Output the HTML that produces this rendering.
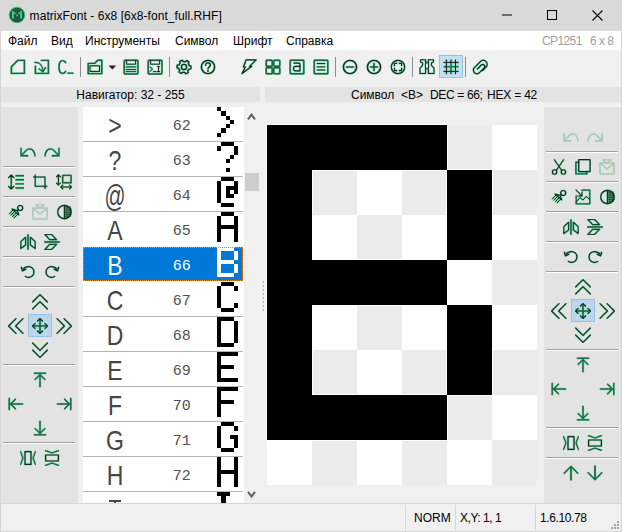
<!DOCTYPE html>
<html><head><meta charset="utf-8">
<style>
*{margin:0;padding:0;box-sizing:border-box}
html,body{width:622px;height:532px;overflow:hidden;background:#f0f0f0;font-family:"Liberation Sans",sans-serif;font-size:12px;color:#000}
.a{position:absolute}
#title{left:0;top:0;width:622px;height:31px;background:#d9d9d9}
#menu{left:0;top:31px;width:622px;height:19px;background:#fff}
.mi{position:absolute;top:34px;font-size:12px;white-space:nowrap}
#tb{left:0;top:50px;width:622px;height:37px;background:#f0f0f0}
.hdr{position:absolute;top:87px;height:15px;background:#e3e3e3;font-size:12px;line-height:17px;text-align:center;white-space:nowrap;overflow:hidden}
.panel{position:absolute;top:107px;height:396px;width:77px;background:#e3e3e3}
#list{left:83px;top:107px;width:161px;height:396px;background:#fff;overflow:hidden}
.row{position:absolute;left:0;width:161px;height:34px}
.row.sel{background:#0078d7;height:34px;width:160px;}
.row.sel::after{content:"";position:absolute;left:0;top:0;right:0;bottom:0;border:1px dotted #f28a1e}
.sep{position:absolute;left:0;width:160px;height:1px;background:#b4b4b4}
.ch{position:absolute;left:11.5px;top:3px;width:40px;text-align:center;font-size:28px;line-height:32px;color:#454545;transform:scaleX(0.82)}
.num{position:absolute;left:89.7px;top:12px;font-family:"Liberation Mono",monospace;font-size:15px;line-height:16px;color:#505050}
.row.sel .ch,.row.sel .num{color:#fff}
.gl{position:absolute;left:134px;top:0;width:25.5px;height:34px;shape-rendering:crispEdges}
.row.sel .gl{top:0}
#status{left:0;top:503px;width:622px;height:29px;background:#f0f0f0;border-top:1px solid #d7d7d7}
.ht{position:absolute;top:88px;line-height:15px;white-space:nowrap}
.psep{position:absolute;height:1px;background:#a0a0a0;border-bottom:1px solid #fff;box-sizing:content-box}
</style></head><body>
<div class="a" id="title"></div>
<svg class="a" style="left:8px;top:6px" width="18" height="18" viewBox="0 0 18 18">
<circle cx="9" cy="9" r="7.8" fill="#1b5e3d" stroke="#3dbb7b" stroke-width="0.9"/>
<g fill="#55c58f"><rect x="4" y="5" width="1.8" height="7.6"/><rect x="12.2" y="5" width="1.8" height="7.6"/><rect x="6" y="6.5" width="1.6" height="1.6"/><rect x="10.4" y="6.5" width="1.6" height="1.6"/><rect x="8.2" y="8.6" width="1.6" height="1.6"/></g>
</svg>
<div class="a" style="left:29.6px;top:9px;font-size:12px;line-height:14px;white-space:nowrap;letter-spacing:0.06px">matrixFont - 6x8 [6x8-font_full.RHF]</div>
<svg class="a" style="left:502px;top:14px" width="11" height="2"><rect x="0" y="0.5" width="10" height="1" fill="#000"/></svg>
<svg class="a" style="left:547px;top:10px" width="11" height="11"><rect x="0.5" y="0.5" width="9" height="9" fill="none" stroke="#000" stroke-width="1"/></svg>
<svg class="a" style="left:592px;top:10px" width="12" height="12"><path d="M0.5 0.5L10.5 10.5M10.5 0.5L0.5 10.5" stroke="#000" stroke-width="1.1"/></svg>

<div class="a" id="menu"></div>
<div class="mi" style="left:8px">Файл</div>
<div class="mi" style="left:51px">Вид</div>
<div class="mi" style="left:85px">Инструменты</div>
<div class="mi" style="left:175px">Символ</div>
<div class="mi" style="left:233px">Шрифт</div>
<div class="mi" style="left:286px">Справка</div>
<div class="mi" style="left:542px;color:#a0a0a0;letter-spacing:-0.6px">CP1251</div>
<div class="mi" style="left:590px;color:#a0a0a0;letter-spacing:-0.5px">6 x 8</div>

<div class="a" id="tb"></div>
<svg class="a" style="left:10px;top:59px" width="16" height="16" viewBox="0 0 16 16" fill="none" stroke="#1b6040" stroke-width="1.8" stroke-linejoin="round" stroke-linecap="round"><g stroke="#6ad6a2" stroke-width="2.44" opacity="0.8"><path d="M1.4 14.4V7.8L7.6 1.4H14.4V14.4Z"/></g><g stroke-width="1.44"><path d="M1.4 14.4V7.8L7.6 1.4H14.4V14.4Z"/></g></svg>
<svg class="a" style="left:34px;top:59px" width="16" height="16" viewBox="0 0 16 16" fill="none" stroke="#1b6040" stroke-width="1.8" stroke-linejoin="round" stroke-linecap="round"><g stroke="#6ad6a2" stroke-width="2.44" opacity="0.8"><path d="M1.4 7.2V14.4H14.4V1.4H7.4"/><path d="M1 3.4C5 3.2 8.6 6 9 12" stroke-width="2.28"/><path d="M5.2 10L9 12.6L11.6 8.6" stroke-width="2.28"/></g><g stroke-width="1.44"><path d="M1.4 7.2V14.4H14.4V1.4H7.4"/><path d="M1 3.4C5 3.2 8.6 6 9 12" stroke-width="1.28"/><path d="M5.2 10L9 12.6L11.6 8.6" stroke-width="1.28"/></g></svg>
<svg class="a" style="left:57px;top:59px" width="17" height="16" viewBox="0 0 17 16" fill="none" stroke="#1b6040" stroke-width="1.8" stroke-linejoin="round" stroke-linecap="round"><g stroke="#6ad6a2" stroke-width="2.44" opacity="0.8"><path d="M8.6 3.6C8 2.2 7 1.6 5.6 1.6C3.2 1.6 2 3.8 2 8C2 12.2 3.2 14.4 5.6 14.4C7 14.4 8 13.8 8.6 12.4"/><path d="M10.8 14.2H16" stroke-width="2.20"/></g><g stroke-width="1.44"><path d="M8.6 3.6C8 2.2 7 1.6 5.6 1.6C3.2 1.6 2 3.8 2 8C2 12.2 3.2 14.4 5.6 14.4C7 14.4 8 13.8 8.6 12.4"/><path d="M10.8 14.2H16" stroke-width="1.20"/></g></svg>
<div class="a" style="left:80px;top:57px;width:1px;height:20px;background:#8c8c8c"></div>
<svg class="a" style="left:87px;top:59px" width="16" height="16" viewBox="0 0 16 16" fill="none" stroke="#1b6040" stroke-width="1.8" stroke-linejoin="round" stroke-linecap="round"><g stroke="#6ad6a2" stroke-width="2.44" opacity="0.8"><path d="M1.2 14.6V4.4H7.6L10.8 1.2H14.8V14.6Z"/><rect x="3.4" y="6.8" width="9.2" height="5.6" stroke="#6ad6a2" stroke-width="1.96"/></g><g stroke-width="1.44"><path d="M1.2 14.6V4.4H7.6L10.8 1.2H14.8V14.6Z"/><rect x="3.4" y="6.8" width="9.2" height="5.6" stroke="#111" stroke-width="0.96"/></g></svg>
<svg class="a" style="left:108px;top:65px" width="9" height="5"><path d="M0.5 0.5H8.2L4.35 4.4Z" fill="#222"/></svg>
<svg class="a" style="left:123px;top:59px" width="16" height="16" viewBox="0 0 16 16" fill="none" stroke="#1b6040" stroke-width="1.8" stroke-linejoin="round" stroke-linecap="round"><g stroke="#6ad6a2" stroke-width="2.44" opacity="0.8"><rect x="1.2" y="1.2" width="13.8" height="13.8" rx="1.2"/><path d="M3.6 1.4V5.2H12.6V1.4" stroke="#6ad6a2" stroke-width="1.88"/><path d="M3.2 7.8H12.8" stroke-width="2.28"/><path d="M3.2 10.5H12.8M3.2 12.6H12.8" stroke="#6ad6a2" stroke-width="1.80"/></g><g stroke-width="1.44"><rect x="1.2" y="1.2" width="13.8" height="13.8" rx="1.2"/><path d="M3.6 1.4V5.2H12.6V1.4" stroke="#111" stroke-width="0.88"/><path d="M3.2 7.8H12.8" stroke-width="1.28"/><path d="M3.2 10.5H12.8M3.2 12.6H12.8" stroke="#111" stroke-width="0.80"/></g></svg>
<svg class="a" style="left:147px;top:59px" width="16" height="16" viewBox="0 0 16 16" fill="none" stroke="#1b6040" stroke-width="1.8" stroke-linejoin="round" stroke-linecap="round"><g stroke="#6ad6a2" stroke-width="2.44" opacity="0.8"><rect x="1.2" y="1.2" width="13.8" height="13.8" rx="1.2"/><path d="M3.6 1.4V5.2H12.6V1.4" stroke="#6ad6a2" stroke-width="1.88"/><path d="M3 8L5.6 10.2L3 12.4" stroke="#6ad6a2" stroke-width="1.88"/><path d="M6.4 12.6H9M10.6 7.6H12.4M11.5 7.6V12.6M10.4 12.6H12.6" stroke="#6ad6a2" stroke-width="1.88"/></g><g stroke-width="1.44"><rect x="1.2" y="1.2" width="13.8" height="13.8" rx="1.2"/><path d="M3.6 1.4V5.2H12.6V1.4" stroke="#111" stroke-width="0.88"/><path d="M3 8L5.6 10.2L3 12.4" stroke="#111" stroke-width="0.88"/><path d="M6.4 12.6H9M10.6 7.6H12.4M11.5 7.6V12.6M10.4 12.6H12.6" stroke="#111" stroke-width="0.88"/></g></svg>
<div class="a" style="left:169px;top:57px;width:1px;height:20px;background:#8c8c8c"></div>
<svg class="a" style="left:176px;top:59px" width="16" height="16" viewBox="0 0 16 16" fill="none" stroke="#1b6040" stroke-width="1.8" stroke-linejoin="round" stroke-linecap="round"><g stroke="#6ad6a2" stroke-width="2.44" opacity="0.8"><path d="M15.00 8.00L14.94 8.91L14.76 9.81L12.99 10.07L12.68 10.70L12.28 11.29L11.82 11.82L12.26 13.55L11.50 14.06L10.68 14.47L9.81 14.76L8.70 13.35L8.00 13.40L7.30 13.35L6.60 13.22L5.32 14.47L4.50 14.06L3.74 13.55L3.05 12.95L3.72 11.29L3.32 10.70L3.01 10.07L2.78 9.40L1.06 8.91L1.00 8.00L1.06 7.09L1.24 6.19L3.01 5.93L3.32 5.30L3.72 4.71L4.18 4.18L3.74 2.45L4.50 1.94L5.32 1.53L6.19 1.24L7.30 2.65L8.00 2.60L8.70 2.65L9.40 2.78L10.68 1.53L11.50 1.94L12.26 2.45L12.95 3.05L12.28 4.71L12.68 5.30L12.99 5.93L13.22 6.60L14.94 7.09Z" stroke="#6ad6a2" stroke-width="2.28"/><circle cx="8" cy="8" r="2.6" stroke="#6ad6a2" stroke-width="2.28"/></g><g stroke-width="1.44"><path d="M15.00 8.00L14.94 8.91L14.76 9.81L12.99 10.07L12.68 10.70L12.28 11.29L11.82 11.82L12.26 13.55L11.50 14.06L10.68 14.47L9.81 14.76L8.70 13.35L8.00 13.40L7.30 13.35L6.60 13.22L5.32 14.47L4.50 14.06L3.74 13.55L3.05 12.95L3.72 11.29L3.32 10.70L3.01 10.07L2.78 9.40L1.06 8.91L1.00 8.00L1.06 7.09L1.24 6.19L3.01 5.93L3.32 5.30L3.72 4.71L4.18 4.18L3.74 2.45L4.50 1.94L5.32 1.53L6.19 1.24L7.30 2.65L8.00 2.60L8.70 2.65L9.40 2.78L10.68 1.53L11.50 1.94L12.26 2.45L12.95 3.05L12.28 4.71L12.68 5.30L12.99 5.93L13.22 6.60L14.94 7.09Z" stroke="#0f2e1e" stroke-width="1.28"/><circle cx="8" cy="8" r="2.6" stroke="#0f2e1e" stroke-width="1.28"/></g></svg>
<svg class="a" style="left:200px;top:59px" width="16" height="16" viewBox="0 0 16 16" fill="none" stroke="#1b6040" stroke-width="1.8" stroke-linejoin="round" stroke-linecap="round"><g stroke="#6ad6a2" stroke-width="2.44" opacity="0.8"><circle cx="8" cy="8" r="6.6" stroke="#6ad6a2" stroke-width="2.36"/><path d="M5.6 6.2C5.6 4.6 6.6 3.8 8 3.8C9.4 3.8 10.4 4.6 10.4 6C10.4 7.6 8.2 7.8 8 9.8" stroke="#6ad6a2" stroke-width="2.28"/><circle cx="8" cy="12" r="0.9" fill="#6ad6a2" stroke="none"/></g><g stroke-width="1.44"><circle cx="8" cy="8" r="6.6" stroke="#0f2e1e" stroke-width="1.36"/><path d="M5.6 6.2C5.6 4.6 6.6 3.8 8 3.8C9.4 3.8 10.4 4.6 10.4 6C10.4 7.6 8.2 7.8 8 9.8" stroke="#0f2e1e" stroke-width="1.28"/><circle cx="8" cy="12" r="0.9" fill="#0f2e1e" stroke="none"/></g></svg>
<svg class="a" style="left:241px;top:59px" width="16" height="16" viewBox="0 0 16 16" fill="none" stroke="#1b6040" stroke-width="1.8" stroke-linejoin="round" stroke-linecap="round"><g stroke="#6ad6a2" stroke-width="2.44" opacity="0.8"><path d="M5.2 0.8H15.2L8.6 7.4H10.6L1 14.6L4.4 8H2.4Z" stroke="#6ad6a2" stroke-width="2.20"/></g><g stroke-width="1.44"><path d="M5.2 0.8H15.2L8.6 7.4H10.6L1 14.6L4.4 8H2.4Z" stroke="#0f2e1e" stroke-width="1.20"/></g></svg>
<svg class="a" style="left:265px;top:59px" width="16" height="16" viewBox="0 0 16 16" fill="none" stroke="#1b6040" stroke-width="1.8" stroke-linejoin="round" stroke-linecap="round"><g stroke="#6ad6a2" stroke-width="2.44" opacity="0.8"><rect x="1.2" y="1.2" width="6" height="6" rx="0.8"/><rect x="8.8" y="1.2" width="6" height="6" rx="0.8"/><rect x="1.2" y="8.8" width="6" height="6" rx="0.8"/><rect x="8.8" y="8.8" width="6" height="6" rx="0.8"/></g><g stroke-width="1.44"><rect x="1.2" y="1.2" width="6" height="6" rx="0.8"/><rect x="8.8" y="1.2" width="6" height="6" rx="0.8"/><rect x="1.2" y="8.8" width="6" height="6" rx="0.8"/><rect x="8.8" y="8.8" width="6" height="6" rx="0.8"/></g></svg>
<svg class="a" style="left:289px;top:59px" width="16" height="16" viewBox="0 0 16 16" fill="none" stroke="#1b6040" stroke-width="1.8" stroke-linejoin="round" stroke-linecap="round"><g stroke="#6ad6a2" stroke-width="2.44" opacity="0.8"><rect x="1.2" y="1.2" width="13.6" height="13.6" rx="0.8"/><path d="M5 4.2H9.6C10.6 4.2 11 4.8 11 5.8V11.8M11 7.4H6.4C5.2 7.4 4.6 8.2 4.6 9.4V10.2C4.6 11.4 5.2 11.8 6.4 11.8H11" stroke="#6ad6a2" stroke-width="2.20"/></g><g stroke-width="1.44"><rect x="1.2" y="1.2" width="13.6" height="13.6" rx="0.8"/><path d="M5 4.2H9.6C10.6 4.2 11 4.8 11 5.8V11.8M11 7.4H6.4C5.2 7.4 4.6 8.2 4.6 9.4V10.2C4.6 11.4 5.2 11.8 6.4 11.8H11" stroke="#0f2e1e" stroke-width="1.20"/></g></svg>
<svg class="a" style="left:313px;top:59px" width="16" height="16" viewBox="0 0 16 16" fill="none" stroke="#1b6040" stroke-width="1.8" stroke-linejoin="round" stroke-linecap="round"><g stroke="#6ad6a2" stroke-width="2.44" opacity="0.8"><rect x="1.2" y="1.2" width="13.6" height="13.6" rx="0.8"/><path d="M4.2 4.6H11.8M4.2 11H11.8" stroke="#6ad6a2" stroke-width="1.96"/><path d="M4.2 7.8H11.8" stroke-width="2.28"/></g><g stroke-width="1.44"><rect x="1.2" y="1.2" width="13.6" height="13.6" rx="0.8"/><path d="M4.2 4.6H11.8M4.2 11H11.8" stroke="#111" stroke-width="0.96"/><path d="M4.2 7.8H11.8" stroke-width="1.28"/></g></svg>
<div class="a" style="left:335px;top:57px;width:1px;height:20px;background:#8c8c8c"></div>
<svg class="a" style="left:342px;top:59px" width="16" height="16" viewBox="0 0 16 16" fill="none" stroke="#1b6040" stroke-width="1.8" stroke-linejoin="round" stroke-linecap="round"><g stroke="#6ad6a2" stroke-width="2.44" opacity="0.8"><circle cx="8" cy="8" r="6.6" stroke="#6ad6a2"/><path d="M4.6 8H11.4" stroke-width="2.60"/></g><g stroke-width="1.44"><circle cx="8" cy="8" r="6.6" stroke="#0f2e1e"/><path d="M4.6 8H11.4" stroke-width="1.60"/></g></svg>
<svg class="a" style="left:366px;top:59px" width="16" height="16" viewBox="0 0 16 16" fill="none" stroke="#1b6040" stroke-width="1.8" stroke-linejoin="round" stroke-linecap="round"><g stroke="#6ad6a2" stroke-width="2.44" opacity="0.8"><circle cx="8" cy="8" r="6.6" stroke="#6ad6a2"/><path d="M4.6 8H11.4M8 4.6V11.4" stroke-width="2.60"/></g><g stroke-width="1.44"><circle cx="8" cy="8" r="6.6" stroke="#0f2e1e"/><path d="M4.6 8H11.4M8 4.6V11.4" stroke-width="1.60"/></g></svg>
<svg class="a" style="left:390px;top:59px" width="16" height="16" viewBox="0 0 16 16" fill="none" stroke="#1b6040" stroke-width="1.8" stroke-linejoin="round" stroke-linecap="round"><g stroke="#6ad6a2" stroke-width="2.44" opacity="0.8"><circle cx="8" cy="8" r="6.7" stroke="#6ad6a2" stroke-width="2.20"/><path d="M4.4 7.2V4.4H7.2M8.8 4.4H11.6V7.2M11.6 8.8V11.6H8.8M7.2 11.6H4.4V8.8" stroke="#6ad6a2" stroke-width="2.12" stroke-linecap="butt"/></g><g stroke-width="1.44"><circle cx="8" cy="8" r="6.7" stroke="#0f2e1e" stroke-width="1.20"/><path d="M4.4 7.2V4.4H7.2M8.8 4.4H11.6V7.2M11.6 8.8V11.6H8.8M7.2 11.6H4.4V8.8" stroke="#0f2e1e" stroke-width="1.12" stroke-linecap="butt"/></g></svg>
<div class="a" style="left:412px;top:57px;width:1px;height:20px;background:#8c8c8c"></div>
<svg class="a" style="left:419px;top:59px" width="16" height="16" viewBox="0 0 16 16" fill="none" stroke="#1b6040" stroke-width="1.8" stroke-linejoin="round" stroke-linecap="round"><g stroke="#6ad6a2" stroke-width="2.44" opacity="0.8"><path d="M1.6 0.8H6.6V14.6H1V9.2L3.4 6.6C3.8 5.6 3.8 4.6 3.4 3.8L1.6 3Z M14.4 0.8H9.4V14.6H15V9.2L12.6 6.6C12.2 5.6 12.2 4.6 12.6 3.8L14.4 3Z" stroke="#6ad6a2" stroke-width="2.04"/><path d="M6.6 3.2H9.4" stroke="#6ad6a2" stroke-width="1.96"/><ellipse cx="8" cy="6.8" rx="1.6" ry="3.2" stroke="#6ad6a2" stroke-width="1.96" fill="#6ad6a2"/></g><g stroke-width="1.44"><path d="M1.6 0.8H6.6V14.6H1V9.2L3.4 6.6C3.8 5.6 3.8 4.6 3.4 3.8L1.6 3Z M14.4 0.8H9.4V14.6H15V9.2L12.6 6.6C12.2 5.6 12.2 4.6 12.6 3.8L14.4 3Z" stroke="#0f2e1e" stroke-width="1.04"/><path d="M6.6 3.2H9.4" stroke="#0f2e1e" stroke-width="0.96"/><ellipse cx="8" cy="6.8" rx="1.6" ry="3.2" stroke="#0f2e1e" stroke-width="0.96" fill="#eef"/></g></svg>
<div class="a" style="left:439px;top:55px;width:24px;height:23px;background:#c7def2;border:1px solid #94c3ea"></div>
<svg class="a" style="left:443px;top:59px" width="16" height="16" viewBox="0 0 16 16" fill="none" stroke="#1b6040" stroke-width="1.8" stroke-linejoin="round" stroke-linecap="round"><g stroke="#6ad6a2" stroke-width="2.44" opacity="0.8"><path d="M8 0.6V15.2M0.4 7.7H15.6" stroke="#6ad6a2" stroke-width="2.60" stroke-linecap="butt"/><path d="M3.4 0.6V15.2M12.5 0.6V15.2M0.4 3.4H15.6M0.4 12.4H15.6" stroke="#6ad6a2" stroke-width="1.96" stroke-linecap="butt"/></g><g stroke-width="1.44"><path d="M8 0.6V15.2M0.4 7.7H15.6" stroke="#1f7a4a" stroke-width="1.60" stroke-linecap="butt"/><path d="M3.4 0.6V15.2M12.5 0.6V15.2M0.4 3.4H15.6M0.4 12.4H15.6" stroke="#111" stroke-width="0.96" stroke-linecap="butt"/></g></svg>
<div class="a" style="left:465px;top:57px;width:1px;height:20px;background:#8c8c8c"></div>
<svg class="a" style="left:472px;top:59px" width="16" height="16" viewBox="0 0 16 16" fill="none" stroke="#1b6040" stroke-width="1.8" stroke-linejoin="round" stroke-linecap="round"><g stroke="#6ad6a2" stroke-width="2.44" opacity="0.8"><path d="M10.6 11.6L14 8.2C15.6 6.6 15.6 4.2 14 2.6C12.4 1 10 1 8.4 2.6L2.4 8.6C1 10 1 12.2 2.4 13.6C3.8 15 6 15 7.4 13.6L12.2 8.8C13 8 13 6.8 12.2 6C11.4 5.2 10.2 5.2 9.4 6L5.4 10" stroke="#6ad6a2" stroke-width="2.20"/></g><g stroke-width="1.44"><path d="M10.6 11.6L14 8.2C15.6 6.6 15.6 4.2 14 2.6C12.4 1 10 1 8.4 2.6L2.4 8.6C1 10 1 12.2 2.4 13.6C3.8 15 6 15 7.4 13.6L12.2 8.8C13 8 13 6.8 12.2 6C11.4 5.2 10.2 5.2 9.4 6L5.4 10" stroke="#0f2e1e" stroke-width="1.20"/></g></svg>

<div class="hdr" style="left:1px;width:259px">Навигатор: 32 - 255</div>
<div class="hdr" style="left:265px;width:356px"></div><div class="ht" style="left:351px">Символ</div><div class="ht" style="left:401px">&lt;B&gt;</div><div class="ht" style="left:430px;letter-spacing:-0.35px">DEC = 66;</div><div class="ht" style="left:487px;letter-spacing:-0.2px">HEX = 42</div>

<div class="panel" style="left:1px"></div>
<div class="panel" style="left:544px"></div>
<div class="a" style="left:3px;top:166px;width:72px;height:1px;background:#a0a0a0"></div><div class="a" style="left:3px;top:167px;width:72px;height:1px;background:#fff"></div>
<div class="a" style="left:3px;top:196px;width:72px;height:1px;background:#a0a0a0"></div><div class="a" style="left:3px;top:197px;width:72px;height:1px;background:#fff"></div>
<div class="a" style="left:3px;top:226px;width:72px;height:1px;background:#a0a0a0"></div><div class="a" style="left:3px;top:227px;width:72px;height:1px;background:#fff"></div>
<div class="a" style="left:3px;top:256px;width:72px;height:1px;background:#a0a0a0"></div><div class="a" style="left:3px;top:257px;width:72px;height:1px;background:#fff"></div>
<div class="a" style="left:3px;top:286px;width:72px;height:1px;background:#a0a0a0"></div><div class="a" style="left:3px;top:287px;width:72px;height:1px;background:#fff"></div>
<div class="a" style="left:3px;top:364px;width:72px;height:1px;background:#a0a0a0"></div><div class="a" style="left:3px;top:365px;width:72px;height:1px;background:#fff"></div>
<div class="a" style="left:3px;top:442px;width:72px;height:1px;background:#a0a0a0"></div><div class="a" style="left:3px;top:443px;width:72px;height:1px;background:#fff"></div>
<svg class="a" style="left:20px;top:144px" width="16" height="16" viewBox="0 0 16 16" fill="none" stroke="#1b6040" stroke-width="1.6" stroke-linejoin="round" stroke-linecap="round"><g stroke="#6ad6a2" stroke-width="2.28" opacity="0.8"><path d="M1 3.8V11.8H8.2" stroke-width="2.36" stroke-linecap="butt" stroke-linejoin="miter"/><path d="M1.6 11.2L6.2 6.4C9.4 3.2 14.2 5 15 11.9"/></g><g stroke-width="1.28"><path d="M1 3.8V11.8H8.2" stroke-width="1.36" stroke-linecap="butt" stroke-linejoin="miter"/><path d="M1.6 11.2L6.2 6.4C9.4 3.2 14.2 5 15 11.9"/></g></svg>
<svg class="a" style="left:44px;top:144px" width="16" height="16" viewBox="0 0 16 16" fill="none" stroke="#1b6040" stroke-width="1.6" stroke-linejoin="round" stroke-linecap="round"><g stroke="#6ad6a2" stroke-width="2.28" opacity="0.8"><path d="M15 3.8V11.8H7.8" stroke-width="2.36" stroke-linecap="butt" stroke-linejoin="miter"/><path d="M14.4 11.2L9.8 6.4C6.6 3.2 1.8 5 1 11.9"/></g><g stroke-width="1.28"><path d="M15 3.8V11.8H7.8" stroke-width="1.36" stroke-linecap="butt" stroke-linejoin="miter"/><path d="M14.4 11.2L9.8 6.4C6.6 3.2 1.8 5 1 11.9"/></g></svg>
<svg class="a" style="left:8px;top:174px" width="16" height="16" viewBox="0 0 16 16" fill="none" stroke="#1b6040" stroke-width="1.6" stroke-linejoin="round" stroke-linecap="round"><g stroke="#6ad6a2" stroke-width="2.28" opacity="0.8"><path d="M3.2 1V15M0.6 3.6L3.2 1L5.8 3.6M0.6 12.4L3.2 15L5.8 12.4" stroke="#6ad6a2" stroke-width="2.12"/><path d="M8 1.8H15.6M8 5.8H15.6M8 9.9H15.6M8 14H15.6" stroke-width="2.36"/></g><g stroke-width="1.28"><path d="M3.2 1V15M0.6 3.6L3.2 1L5.8 3.6M0.6 12.4L3.2 15L5.8 12.4" stroke="#0f2e1e" stroke-width="1.12"/><path d="M8 1.8H15.6M8 5.8H15.6M8 9.9H15.6M8 14H15.6" stroke-width="1.36"/></g></svg>
<svg class="a" style="left:32px;top:174px" width="16" height="16" viewBox="0 0 16 16" fill="none" stroke="#1b6040" stroke-width="1.6" stroke-linejoin="round" stroke-linecap="round"><g stroke="#6ad6a2" stroke-width="2.28" opacity="0.8"><path d="M1 3H13V15M3.2 0.6V12.2H15.4" stroke="#6ad6a2" stroke-width="2.04" stroke-linecap="butt"/></g><g stroke-width="1.28"><path d="M1 3H13V15M3.2 0.6V12.2H15.4" stroke="#0f2e1e" stroke-width="1.04" stroke-linecap="butt"/></g></svg>
<svg class="a" style="left:56px;top:174px" width="16" height="16" viewBox="0 0 16 16" fill="none" stroke="#1b6040" stroke-width="1.6" stroke-linejoin="round" stroke-linecap="round"><g stroke="#6ad6a2" stroke-width="2.28" opacity="0.8"><path d="M2.4 0.8V11M0.4 2.8L2.4 0.8L4.4 2.8M0.4 9L2.4 11L4.4 9" stroke="#6ad6a2" stroke-width="2.04"/><rect x="6.7" y="1.4" width="8.4" height="7.4" stroke-width="2.44"/><path d="M4.8 13H15.6M6.8 11L4.8 13L6.8 15M13.6 11L15.6 13L13.6 15" stroke="#6ad6a2" stroke-width="2.04"/></g><g stroke-width="1.28"><path d="M2.4 0.8V11M0.4 2.8L2.4 0.8L4.4 2.8M0.4 9L2.4 11L4.4 9" stroke="#0f2e1e" stroke-width="1.04"/><rect x="6.7" y="1.4" width="8.4" height="7.4" stroke-width="1.44"/><path d="M4.8 13H15.6M6.8 11L4.8 13L6.8 15M13.6 11L15.6 13L13.6 15" stroke="#0f2e1e" stroke-width="1.04"/></g></svg>
<svg class="a" style="left:8px;top:204px" width="16" height="16" viewBox="0 0 16 16" fill="none" stroke="#1b6040" stroke-width="1.6" stroke-linejoin="round" stroke-linecap="round"><g stroke="#6ad6a2" stroke-width="2.28" opacity="0.8"><circle cx="12.2" cy="4" r="2.5" stroke="#6ad6a2" stroke-width="2.20"/><path d="M10.5 5.6L9.2 6.6M4 5.1L9.2 6.6L10.8 10.9Z" stroke="#6ad6a2" stroke-width="2.12"/><path d="M5 6L1.4 9.8M6.6 7.3L3 11.1M8.2 8.7L4.6 12.5M9.8 10L6.2 13.8" stroke="#6ad6a2" stroke-width="1.96"/></g><g stroke-width="1.28"><circle cx="12.2" cy="4" r="2.5" stroke="#0f2e1e" stroke-width="1.20"/><path d="M10.5 5.6L9.2 6.6M4 5.1L9.2 6.6L10.8 10.9Z" stroke="#0f2e1e" stroke-width="1.12"/><path d="M5 6L1.4 9.8M6.6 7.3L3 11.1M8.2 8.7L4.6 12.5M9.8 10L6.2 13.8" stroke="#0f2e1e" stroke-width="0.96"/></g></svg>
<svg class="a" style="left:32px;top:204px" width="16" height="16" viewBox="0 0 16 16" fill="none" stroke="#a3c9b3" stroke-width="1.6" stroke-linejoin="round" stroke-linecap="round"><rect x="1" y="4" width="14" height="11" stroke-width="1.5"/><path d="M1.2 4.2L8 10L14.8 4.2" stroke-width="1.4"/><path d="M3.6 0.8H12.4L8 4.6Z" stroke-width="1.3"/></svg>
<svg class="a" style="left:57px;top:204px" width="16" height="16" viewBox="0 0 16 16" fill="none" stroke="#1b6040" stroke-width="1.6" stroke-linejoin="round" stroke-linecap="round"><g stroke="#6ad6a2" stroke-width="2.28" opacity="0.8"><path d="M9.2 1.8V14.2M11 2.4V13.6M12.8 3.6V12.4M7.4 3.2H14M7.4 5H14.6M7.4 6.8H14.9M7.4 8.6H14.9M7.4 10.4H14.6M7.4 12.2H13.8" stroke="#6ad6a2" stroke-width="1.72" stroke-linecap="butt"/><path d="M7.4 1.3V14.7" stroke="#6ad6a2" stroke-width="2.04"/><circle cx="7.4" cy="8" r="6.7" stroke="#6ad6a2" stroke-width="2.20"/></g><g stroke-width="1.28"><path d="M9.2 1.8V14.2M11 2.4V13.6M12.8 3.6V12.4M7.4 3.2H14M7.4 5H14.6M7.4 6.8H14.9M7.4 8.6H14.9M7.4 10.4H14.6M7.4 12.2H13.8" stroke="#0f2e1e" stroke-width="0.72" stroke-linecap="butt"/><path d="M7.4 1.3V14.7" stroke="#0f2e1e" stroke-width="1.04"/><circle cx="7.4" cy="8" r="6.7" stroke="#0f2e1e" stroke-width="1.20"/></g></svg>
<svg class="a" style="left:20px;top:234px" width="16" height="16" viewBox="0 0 16 16" fill="none" stroke="#1b6040" stroke-width="1.6" stroke-linejoin="round" stroke-linecap="round"><g stroke="#6ad6a2" stroke-width="2.28" opacity="0.8"><path d="M8 0.2V15.8" stroke-width="2.60" stroke-linecap="butt"/><path d="M0.8 7.6L5.6 3.3V11L0.8 14.5Z M15.2 7.6L10.4 3.3V11L15.2 14.5Z" stroke="#6ad6a2" stroke-width="2.20"/></g><g stroke-width="1.28"><path d="M8 0.2V15.8" stroke-width="1.60" stroke-linecap="butt"/><path d="M0.8 7.6L5.6 3.3V11L0.8 14.5Z M15.2 7.6L10.4 3.3V11L15.2 14.5Z" stroke="#12452b" stroke-width="1.20"/></g></svg>
<svg class="a" style="left:44px;top:234px" width="16" height="16" viewBox="0 0 16 16" fill="none" stroke="#1b6040" stroke-width="1.6" stroke-linejoin="round" stroke-linecap="round"><g stroke="#6ad6a2" stroke-width="2.28" opacity="0.8"><path d="M0.2 8H15.8" stroke-width="2.60" stroke-linecap="butt"/><path d="M0.9 0.5H7.5L12.5 5.6H5.6Z M0.9 15.5H7.5L12.5 10.4H5.6Z" stroke="#6ad6a2" stroke-width="2.20"/></g><g stroke-width="1.28"><path d="M0.2 8H15.8" stroke-width="1.60" stroke-linecap="butt"/><path d="M0.9 0.5H7.5L12.5 5.6H5.6Z M0.9 15.5H7.5L12.5 10.4H5.6Z" stroke="#12452b" stroke-width="1.20"/></g></svg>
<svg class="a" style="left:20px;top:264px" width="16" height="16" viewBox="0 0 16 16" fill="none" stroke="#1b6040" stroke-width="1.6" stroke-linejoin="round" stroke-linecap="round"><g stroke="#6ad6a2" stroke-width="2.28" opacity="0.8"><path d="M3 5.2C4.2 3.6 6 2.6 8.6 2.6C11.6 2.6 14 5 14 8C14 11 11.6 13.4 8.6 13.4C7.4 13.4 6.4 13 5.4 12.4" stroke="#6ad6a2" stroke-width="2.20"/><path d="M1.4 3.4L2.4 6.8L5.8 5.2" stroke="#6ad6a2" stroke-width="2.28"/></g><g stroke-width="1.28"><path d="M3 5.2C4.2 3.6 6 2.6 8.6 2.6C11.6 2.6 14 5 14 8C14 11 11.6 13.4 8.6 13.4C7.4 13.4 6.4 13 5.4 12.4" stroke="#0f2e1e" stroke-width="1.20"/><path d="M1.4 3.4L2.4 6.8L5.8 5.2" stroke="#0f2e1e" stroke-width="1.28"/></g></svg>
<svg class="a" style="left:44px;top:264px" width="16" height="16" viewBox="0 0 16 16" fill="none" stroke="#1b6040" stroke-width="1.6" stroke-linejoin="round" stroke-linecap="round"><g stroke="#6ad6a2" stroke-width="2.28" opacity="0.8"><path d="M13 5.2C11.8 3.6 10 2.6 7.4 2.6C4.4 2.6 2 5 2 8C2 11 4.4 13.4 7.4 13.4C8.6 13.4 9.6 13 10.6 12.4" stroke="#6ad6a2" stroke-width="2.20"/><path d="M14.6 3.4L13.6 6.8L10.2 5.2" stroke="#6ad6a2" stroke-width="2.28"/></g><g stroke-width="1.28"><path d="M13 5.2C11.8 3.6 10 2.6 7.4 2.6C4.4 2.6 2 5 2 8C2 11 4.4 13.4 7.4 13.4C8.6 13.4 9.6 13 10.6 12.4" stroke="#0f2e1e" stroke-width="1.20"/><path d="M14.6 3.4L13.6 6.8L10.2 5.2" stroke="#0f2e1e" stroke-width="1.28"/></g></svg>
<div class="a" style="left:28px;top:314px;width:24px;height:23px;background:#bcd6ee;border:1px solid #94c3ea"></div>
<svg class="a" style="left:32px;top:294px" width="16" height="16" viewBox="0 0 16 16" fill="none" stroke="#1b6040" stroke-width="1.6" stroke-linejoin="round" stroke-linecap="round"><g stroke="#6ad6a2" stroke-width="2.28" opacity="0.8"><path d="M0.6 8L8 0.6L15.4 8M0.6 15L8 7.6L15.4 15" stroke="#6ad6a2" stroke-width="2.12"/></g><g stroke-width="1.28"><path d="M0.6 8L8 0.6L15.4 8M0.6 15L8 7.6L15.4 15" stroke="#0f2e1e" stroke-width="1.12"/></g></svg>
<svg class="a" style="left:8px;top:318px" width="16" height="16" viewBox="0 0 16 16" fill="none" stroke="#1b6040" stroke-width="1.6" stroke-linejoin="round" stroke-linecap="round"><g stroke="#6ad6a2" stroke-width="2.28" opacity="0.8"><path d="M8 0.6L0.6 8L8 15.4M15 0.6L7.6 8L15 15.4" stroke="#6ad6a2" stroke-width="2.12"/></g><g stroke-width="1.28"><path d="M8 0.6L0.6 8L8 15.4M15 0.6L7.6 8L15 15.4" stroke="#0f2e1e" stroke-width="1.12"/></g></svg>
<svg class="a" style="left:32px;top:318px" width="16" height="16" viewBox="0 0 16 16" fill="none" stroke="#1b6040" stroke-width="1.6" stroke-linejoin="round" stroke-linecap="round"><g stroke="#6ad6a2" stroke-width="2.28" opacity="0.8"><path d="M8 0.8V15.2M0.8 8H15.2" stroke-width="2.60" stroke-linecap="butt"/><path d="M5.6 3L8 0.6L10.4 3M5.6 13L8 15.4L10.4 13M3 5.6L0.6 8L3 10.4M13 5.6L15.4 8L13 10.4" stroke="#6ad6a2" stroke-width="2.28"/></g><g stroke-width="1.28"><path d="M8 0.8V15.2M0.8 8H15.2" stroke-width="1.60" stroke-linecap="butt"/><path d="M5.6 3L8 0.6L10.4 3M5.6 13L8 15.4L10.4 13M3 5.6L0.6 8L3 10.4M13 5.6L15.4 8L13 10.4" stroke="#0f2e1e" stroke-width="1.28"/></g></svg>
<svg class="a" style="left:56px;top:318px" width="16" height="16" viewBox="0 0 16 16" fill="none" stroke="#1b6040" stroke-width="1.6" stroke-linejoin="round" stroke-linecap="round"><g stroke="#6ad6a2" stroke-width="2.28" opacity="0.8"><path d="M1 0.6L8.4 8L1 15.4M8 0.6L15.4 8L8 15.4" stroke="#6ad6a2" stroke-width="2.12"/></g><g stroke-width="1.28"><path d="M1 0.6L8.4 8L1 15.4M8 0.6L15.4 8L8 15.4" stroke="#0f2e1e" stroke-width="1.12"/></g></svg>
<svg class="a" style="left:32px;top:342px" width="16" height="16" viewBox="0 0 16 16" fill="none" stroke="#1b6040" stroke-width="1.6" stroke-linejoin="round" stroke-linecap="round"><g stroke="#6ad6a2" stroke-width="2.28" opacity="0.8"><path d="M0.6 1L8 8.4L15.4 1M0.6 8L8 15.4L15.4 8" stroke="#6ad6a2" stroke-width="2.12"/></g><g stroke-width="1.28"><path d="M0.6 1L8 8.4L15.4 1M0.6 8L8 15.4L15.4 8" stroke="#0f2e1e" stroke-width="1.12"/></g></svg>
<svg class="a" style="left:32px;top:372px" width="16" height="16" viewBox="0 0 16 16" fill="none" stroke="#1b6040" stroke-width="1.6" stroke-linejoin="round" stroke-linecap="round"><g stroke="#6ad6a2" stroke-width="2.28" opacity="0.8"><path d="M1.8 1.2H14.2" stroke-width="2.36" stroke-linecap="butt"/><path d="M8 2.4V15.2" stroke-width="2.44" stroke-linecap="butt"/><path d="M3.2 7.4L8 2.6L12.8 7.4" stroke-width="2.28"/></g><g stroke-width="1.28"><path d="M1.8 1.2H14.2" stroke-width="1.36" stroke-linecap="butt"/><path d="M8 2.4V15.2" stroke-width="1.44" stroke-linecap="butt"/><path d="M3.2 7.4L8 2.6L12.8 7.4" stroke-width="1.28"/></g></svg>
<svg class="a" style="left:8px;top:396px" width="16" height="16" viewBox="0 0 16 16" fill="none" stroke="#1b6040" stroke-width="1.6" stroke-linejoin="round" stroke-linecap="round"><g stroke="#6ad6a2" stroke-width="2.28" opacity="0.8"><path d="M1.2 1.8V14.2" stroke-width="2.36" stroke-linecap="butt"/><path d="M2.4 8H15.2" stroke-width="2.44" stroke-linecap="butt"/><path d="M7.4 3.2L2.6 8L7.4 12.8" stroke-width="2.28"/></g><g stroke-width="1.28"><path d="M1.2 1.8V14.2" stroke-width="1.36" stroke-linecap="butt"/><path d="M2.4 8H15.2" stroke-width="1.44" stroke-linecap="butt"/><path d="M7.4 3.2L2.6 8L7.4 12.8" stroke-width="1.28"/></g></svg>
<svg class="a" style="left:56px;top:396px" width="16" height="16" viewBox="0 0 16 16" fill="none" stroke="#1b6040" stroke-width="1.6" stroke-linejoin="round" stroke-linecap="round"><g stroke="#6ad6a2" stroke-width="2.28" opacity="0.8"><path d="M14.8 1.8V14.2" stroke-width="2.36" stroke-linecap="butt"/><path d="M13.6 8H0.8" stroke-width="2.44" stroke-linecap="butt"/><path d="M8.6 3.2L13.4 8L8.6 12.8" stroke-width="2.28"/></g><g stroke-width="1.28"><path d="M14.8 1.8V14.2" stroke-width="1.36" stroke-linecap="butt"/><path d="M13.6 8H0.8" stroke-width="1.44" stroke-linecap="butt"/><path d="M8.6 3.2L13.4 8L8.6 12.8" stroke-width="1.28"/></g></svg>
<svg class="a" style="left:32px;top:420px" width="16" height="16" viewBox="0 0 16 16" fill="none" stroke="#1b6040" stroke-width="1.6" stroke-linejoin="round" stroke-linecap="round"><g stroke="#6ad6a2" stroke-width="2.28" opacity="0.8"><path d="M1.8 14.8H14.2" stroke-width="2.36" stroke-linecap="butt"/><path d="M8 13.6V0.8" stroke-width="2.44" stroke-linecap="butt"/><path d="M3.2 8.6L8 13.4L12.8 8.6" stroke-width="2.28"/></g><g stroke-width="1.28"><path d="M1.8 14.8H14.2" stroke-width="1.36" stroke-linecap="butt"/><path d="M8 13.6V0.8" stroke-width="1.44" stroke-linecap="butt"/><path d="M3.2 8.6L8 13.4L12.8 8.6" stroke-width="1.28"/></g></svg>
<svg class="a" style="left:20px;top:450px" width="16" height="16" viewBox="0 0 16 16" fill="none" stroke="#1b6040" stroke-width="1.6" stroke-linejoin="round" stroke-linecap="round"><g stroke="#6ad6a2" stroke-width="2.28" opacity="0.8"><path d="M0.6 1.6L3 8L0.6 14.4M15.4 1.6L13 8L15.4 14.4" stroke-width="2.20"/><rect x="5" y="1.6" width="6" height="12.8" stroke="#6ad6a2" stroke-width="2.20"/></g><g stroke-width="1.28"><path d="M0.6 1.6L3 8L0.6 14.4M15.4 1.6L13 8L15.4 14.4" stroke-width="1.20"/><rect x="5" y="1.6" width="6" height="12.8" stroke="#0f2e1e" stroke-width="1.20"/></g></svg>
<svg class="a" style="left:44px;top:450px" width="16" height="16" viewBox="0 0 16 16" fill="none" stroke="#1b6040" stroke-width="1.6" stroke-linejoin="round" stroke-linecap="round"><g stroke="#6ad6a2" stroke-width="2.28" opacity="0.8"><path d="M1.6 0.6L8 3L14.4 0.6M1.6 15.4L8 13L14.4 15.4" stroke-width="2.20"/><rect x="1.6" y="5" width="12.8" height="6" stroke="#6ad6a2" stroke-width="2.20"/></g><g stroke-width="1.28"><path d="M1.6 0.6L8 3L14.4 0.6M1.6 15.4L8 13L14.4 15.4" stroke-width="1.20"/><rect x="1.6" y="5" width="12.8" height="6" stroke="#0f2e1e" stroke-width="1.20"/></g></svg>
<div class="a" style="left:546px;top:151px;width:72px;height:1px;background:#a0a0a0"></div><div class="a" style="left:546px;top:152px;width:72px;height:1px;background:#fff"></div>
<div class="a" style="left:546px;top:181px;width:72px;height:1px;background:#a0a0a0"></div><div class="a" style="left:546px;top:182px;width:72px;height:1px;background:#fff"></div>
<div class="a" style="left:546px;top:211px;width:72px;height:1px;background:#a0a0a0"></div><div class="a" style="left:546px;top:212px;width:72px;height:1px;background:#fff"></div>
<div class="a" style="left:546px;top:241px;width:72px;height:1px;background:#a0a0a0"></div><div class="a" style="left:546px;top:242px;width:72px;height:1px;background:#fff"></div>
<div class="a" style="left:546px;top:271px;width:72px;height:1px;background:#a0a0a0"></div><div class="a" style="left:546px;top:272px;width:72px;height:1px;background:#fff"></div>
<div class="a" style="left:546px;top:349px;width:72px;height:1px;background:#a0a0a0"></div><div class="a" style="left:546px;top:350px;width:72px;height:1px;background:#fff"></div>
<div class="a" style="left:546px;top:427px;width:72px;height:1px;background:#a0a0a0"></div><div class="a" style="left:546px;top:428px;width:72px;height:1px;background:#fff"></div>
<div class="a" style="left:546px;top:457px;width:72px;height:1px;background:#a0a0a0"></div><div class="a" style="left:546px;top:458px;width:72px;height:1px;background:#fff"></div>
<svg class="a" style="left:563px;top:129px" width="16" height="16" viewBox="0 0 16 16" fill="none" stroke="#a3c9b3" stroke-width="1.6" stroke-linejoin="round" stroke-linecap="round"><path d="M1 3.8V11.8H8.2" stroke-width="1.7" stroke-linecap="butt" stroke-linejoin="miter"/><path d="M1.6 11.2L6.2 6.4C9.4 3.2 14.2 5 15 11.9"/></svg>
<svg class="a" style="left:587px;top:129px" width="16" height="16" viewBox="0 0 16 16" fill="none" stroke="#a3c9b3" stroke-width="1.6" stroke-linejoin="round" stroke-linecap="round"><path d="M15 3.8V11.8H7.8" stroke-width="1.7" stroke-linecap="butt" stroke-linejoin="miter"/><path d="M14.4 11.2L9.8 6.4C6.6 3.2 1.8 5 1 11.9"/></svg>
<svg class="a" style="left:551px;top:159px" width="16" height="16" viewBox="0 0 16 16" fill="none" stroke="#1b6040" stroke-width="1.6" stroke-linejoin="round" stroke-linecap="round"><g stroke="#6ad6a2" stroke-width="2.28" opacity="0.8"><path d="M3.4 0.8L10.6 11.2M12.6 0.8L5.4 11.2" stroke="#6ad6a2" stroke-width="2.04"/><circle cx="3.6" cy="13" r="2.2" stroke="#6ad6a2" stroke-width="2.12"/><circle cx="12.4" cy="13" r="2.2" stroke="#6ad6a2" stroke-width="2.12"/></g><g stroke-width="1.28"><path d="M3.4 0.8L10.6 11.2M12.6 0.8L5.4 11.2" stroke="#0f2e1e" stroke-width="1.04"/><circle cx="3.6" cy="13" r="2.2" stroke="#0f2e1e" stroke-width="1.12"/><circle cx="12.4" cy="13" r="2.2" stroke="#0f2e1e" stroke-width="1.12"/></g></svg>
<svg class="a" style="left:575px;top:159px" width="16" height="16" viewBox="0 0 16 16" fill="none" stroke="#1b6040" stroke-width="1.6" stroke-linejoin="round" stroke-linecap="round"><g stroke="#6ad6a2" stroke-width="2.28" opacity="0.8"><path d="M3.6 3.2H0.9V14.9H11.8V12.7" stroke-width="2.44" stroke-linejoin="round"/><rect x="3.7" y="0.7" width="11.4" height="12" rx="0.6" stroke="#6ad6a2" stroke-width="2.20"/></g><g stroke-width="1.28"><path d="M3.6 3.2H0.9V14.9H11.8V12.7" stroke-width="1.44" stroke-linejoin="round"/><rect x="3.7" y="0.7" width="11.4" height="12" rx="0.6" stroke="#0f2e1e" stroke-width="1.20"/></g></svg>
<svg class="a" style="left:599px;top:159px" width="16" height="16" viewBox="0 0 16 16" fill="none" stroke="#a3c9b3" stroke-width="1.6" stroke-linejoin="round" stroke-linecap="round"><rect x="1" y="4" width="14" height="11" stroke-width="1.5"/><path d="M1.2 4.2L8 10L14.8 4.2" stroke-width="1.4"/><path d="M3.6 0.8H12.4L8 4.6Z" stroke-width="1.3"/></svg>
<svg class="a" style="left:551px;top:189px" width="16" height="16" viewBox="0 0 16 16" fill="none" stroke="#1b6040" stroke-width="1.6" stroke-linejoin="round" stroke-linecap="round"><g stroke="#6ad6a2" stroke-width="2.28" opacity="0.8"><circle cx="12.2" cy="4" r="2.5" stroke="#6ad6a2" stroke-width="2.20"/><path d="M10.5 5.6L9.2 6.6M4 5.1L9.2 6.6L10.8 10.9Z" stroke="#6ad6a2" stroke-width="2.12"/><path d="M5 6L1.4 9.8M6.6 7.3L3 11.1M8.2 8.7L4.6 12.5M9.8 10L6.2 13.8" stroke="#6ad6a2" stroke-width="1.96"/></g><g stroke-width="1.28"><circle cx="12.2" cy="4" r="2.5" stroke="#0f2e1e" stroke-width="1.20"/><path d="M10.5 5.6L9.2 6.6M4 5.1L9.2 6.6L10.8 10.9Z" stroke="#0f2e1e" stroke-width="1.12"/><path d="M5 6L1.4 9.8M6.6 7.3L3 11.1M8.2 8.7L4.6 12.5M9.8 10L6.2 13.8" stroke="#0f2e1e" stroke-width="0.96"/></g></svg>
<svg class="a" style="left:575px;top:189px" width="16" height="16" viewBox="0 0 16 16" fill="none" stroke="#1b6040" stroke-width="1.6" stroke-linejoin="round" stroke-linecap="round"><g stroke="#6ad6a2" stroke-width="2.28" opacity="0.8"><path d="M7 1.2H14.8V14.8H1.2V7" stroke-width="2.28"/><path d="M1.2 13L5 8.6L8 11L11.2 7.4L14.8 10.4" stroke="#6ad6a2" stroke-width="1.96"/><path d="M1 1L7 7M7 3V7H3" stroke="#6ad6a2" stroke-width="2.04"/></g><g stroke-width="1.28"><path d="M7 1.2H14.8V14.8H1.2V7" stroke-width="1.28"/><path d="M1.2 13L5 8.6L8 11L11.2 7.4L14.8 10.4" stroke="#0f2e1e" stroke-width="0.96"/><path d="M1 1L7 7M7 3V7H3" stroke="#0f2e1e" stroke-width="1.04"/></g></svg>
<svg class="a" style="left:600px;top:189px" width="16" height="16" viewBox="0 0 16 16" fill="none" stroke="#1b6040" stroke-width="1.6" stroke-linejoin="round" stroke-linecap="round"><g stroke="#6ad6a2" stroke-width="2.28" opacity="0.8"><path d="M9.2 1.8V14.2M11 2.4V13.6M12.8 3.6V12.4M7.4 3.2H14M7.4 5H14.6M7.4 6.8H14.9M7.4 8.6H14.9M7.4 10.4H14.6M7.4 12.2H13.8" stroke="#6ad6a2" stroke-width="1.72" stroke-linecap="butt"/><path d="M7.4 1.3V14.7" stroke="#6ad6a2" stroke-width="2.04"/><circle cx="7.4" cy="8" r="6.7" stroke="#6ad6a2" stroke-width="2.20"/></g><g stroke-width="1.28"><path d="M9.2 1.8V14.2M11 2.4V13.6M12.8 3.6V12.4M7.4 3.2H14M7.4 5H14.6M7.4 6.8H14.9M7.4 8.6H14.9M7.4 10.4H14.6M7.4 12.2H13.8" stroke="#0f2e1e" stroke-width="0.72" stroke-linecap="butt"/><path d="M7.4 1.3V14.7" stroke="#0f2e1e" stroke-width="1.04"/><circle cx="7.4" cy="8" r="6.7" stroke="#0f2e1e" stroke-width="1.20"/></g></svg>
<svg class="a" style="left:563px;top:219px" width="16" height="16" viewBox="0 0 16 16" fill="none" stroke="#1b6040" stroke-width="1.6" stroke-linejoin="round" stroke-linecap="round"><g stroke="#6ad6a2" stroke-width="2.28" opacity="0.8"><path d="M8 0.2V15.8" stroke-width="2.60" stroke-linecap="butt"/><path d="M0.8 7.6L5.6 3.3V11L0.8 14.5Z M15.2 7.6L10.4 3.3V11L15.2 14.5Z" stroke="#6ad6a2" stroke-width="2.20"/></g><g stroke-width="1.28"><path d="M8 0.2V15.8" stroke-width="1.60" stroke-linecap="butt"/><path d="M0.8 7.6L5.6 3.3V11L0.8 14.5Z M15.2 7.6L10.4 3.3V11L15.2 14.5Z" stroke="#12452b" stroke-width="1.20"/></g></svg>
<svg class="a" style="left:587px;top:219px" width="16" height="16" viewBox="0 0 16 16" fill="none" stroke="#1b6040" stroke-width="1.6" stroke-linejoin="round" stroke-linecap="round"><g stroke="#6ad6a2" stroke-width="2.28" opacity="0.8"><path d="M0.2 8H15.8" stroke-width="2.60" stroke-linecap="butt"/><path d="M0.9 0.5H7.5L12.5 5.6H5.6Z M0.9 15.5H7.5L12.5 10.4H5.6Z" stroke="#6ad6a2" stroke-width="2.20"/></g><g stroke-width="1.28"><path d="M0.2 8H15.8" stroke-width="1.60" stroke-linecap="butt"/><path d="M0.9 0.5H7.5L12.5 5.6H5.6Z M0.9 15.5H7.5L12.5 10.4H5.6Z" stroke="#12452b" stroke-width="1.20"/></g></svg>
<svg class="a" style="left:563px;top:249px" width="16" height="16" viewBox="0 0 16 16" fill="none" stroke="#1b6040" stroke-width="1.6" stroke-linejoin="round" stroke-linecap="round"><g stroke="#6ad6a2" stroke-width="2.28" opacity="0.8"><path d="M3 5.2C4.2 3.6 6 2.6 8.6 2.6C11.6 2.6 14 5 14 8C14 11 11.6 13.4 8.6 13.4C7.4 13.4 6.4 13 5.4 12.4" stroke="#6ad6a2" stroke-width="2.20"/><path d="M1.4 3.4L2.4 6.8L5.8 5.2" stroke="#6ad6a2" stroke-width="2.28"/></g><g stroke-width="1.28"><path d="M3 5.2C4.2 3.6 6 2.6 8.6 2.6C11.6 2.6 14 5 14 8C14 11 11.6 13.4 8.6 13.4C7.4 13.4 6.4 13 5.4 12.4" stroke="#0f2e1e" stroke-width="1.20"/><path d="M1.4 3.4L2.4 6.8L5.8 5.2" stroke="#0f2e1e" stroke-width="1.28"/></g></svg>
<svg class="a" style="left:587px;top:249px" width="16" height="16" viewBox="0 0 16 16" fill="none" stroke="#1b6040" stroke-width="1.6" stroke-linejoin="round" stroke-linecap="round"><g stroke="#6ad6a2" stroke-width="2.28" opacity="0.8"><path d="M13 5.2C11.8 3.6 10 2.6 7.4 2.6C4.4 2.6 2 5 2 8C2 11 4.4 13.4 7.4 13.4C8.6 13.4 9.6 13 10.6 12.4" stroke="#6ad6a2" stroke-width="2.20"/><path d="M14.6 3.4L13.6 6.8L10.2 5.2" stroke="#6ad6a2" stroke-width="2.28"/></g><g stroke-width="1.28"><path d="M13 5.2C11.8 3.6 10 2.6 7.4 2.6C4.4 2.6 2 5 2 8C2 11 4.4 13.4 7.4 13.4C8.6 13.4 9.6 13 10.6 12.4" stroke="#0f2e1e" stroke-width="1.20"/><path d="M14.6 3.4L13.6 6.8L10.2 5.2" stroke="#0f2e1e" stroke-width="1.28"/></g></svg>
<div class="a" style="left:571px;top:299px;width:24px;height:23px;background:#bcd6ee;border:1px solid #94c3ea"></div>
<svg class="a" style="left:575px;top:279px" width="16" height="16" viewBox="0 0 16 16" fill="none" stroke="#1b6040" stroke-width="1.6" stroke-linejoin="round" stroke-linecap="round"><g stroke="#6ad6a2" stroke-width="2.28" opacity="0.8"><path d="M0.6 8L8 0.6L15.4 8M0.6 15L8 7.6L15.4 15" stroke="#6ad6a2" stroke-width="2.12"/></g><g stroke-width="1.28"><path d="M0.6 8L8 0.6L15.4 8M0.6 15L8 7.6L15.4 15" stroke="#0f2e1e" stroke-width="1.12"/></g></svg>
<svg class="a" style="left:551px;top:303px" width="16" height="16" viewBox="0 0 16 16" fill="none" stroke="#1b6040" stroke-width="1.6" stroke-linejoin="round" stroke-linecap="round"><g stroke="#6ad6a2" stroke-width="2.28" opacity="0.8"><path d="M8 0.6L0.6 8L8 15.4M15 0.6L7.6 8L15 15.4" stroke="#6ad6a2" stroke-width="2.12"/></g><g stroke-width="1.28"><path d="M8 0.6L0.6 8L8 15.4M15 0.6L7.6 8L15 15.4" stroke="#0f2e1e" stroke-width="1.12"/></g></svg>
<svg class="a" style="left:575px;top:303px" width="16" height="16" viewBox="0 0 16 16" fill="none" stroke="#1b6040" stroke-width="1.6" stroke-linejoin="round" stroke-linecap="round"><g stroke="#6ad6a2" stroke-width="2.28" opacity="0.8"><path d="M8 0.8V15.2M0.8 8H15.2" stroke-width="2.60" stroke-linecap="butt"/><path d="M5.6 3L8 0.6L10.4 3M5.6 13L8 15.4L10.4 13M3 5.6L0.6 8L3 10.4M13 5.6L15.4 8L13 10.4" stroke="#6ad6a2" stroke-width="2.28"/></g><g stroke-width="1.28"><path d="M8 0.8V15.2M0.8 8H15.2" stroke-width="1.60" stroke-linecap="butt"/><path d="M5.6 3L8 0.6L10.4 3M5.6 13L8 15.4L10.4 13M3 5.6L0.6 8L3 10.4M13 5.6L15.4 8L13 10.4" stroke="#0f2e1e" stroke-width="1.28"/></g></svg>
<svg class="a" style="left:599px;top:303px" width="16" height="16" viewBox="0 0 16 16" fill="none" stroke="#1b6040" stroke-width="1.6" stroke-linejoin="round" stroke-linecap="round"><g stroke="#6ad6a2" stroke-width="2.28" opacity="0.8"><path d="M1 0.6L8.4 8L1 15.4M8 0.6L15.4 8L8 15.4" stroke="#6ad6a2" stroke-width="2.12"/></g><g stroke-width="1.28"><path d="M1 0.6L8.4 8L1 15.4M8 0.6L15.4 8L8 15.4" stroke="#0f2e1e" stroke-width="1.12"/></g></svg>
<svg class="a" style="left:575px;top:327px" width="16" height="16" viewBox="0 0 16 16" fill="none" stroke="#1b6040" stroke-width="1.6" stroke-linejoin="round" stroke-linecap="round"><g stroke="#6ad6a2" stroke-width="2.28" opacity="0.8"><path d="M0.6 1L8 8.4L15.4 1M0.6 8L8 15.4L15.4 8" stroke="#6ad6a2" stroke-width="2.12"/></g><g stroke-width="1.28"><path d="M0.6 1L8 8.4L15.4 1M0.6 8L8 15.4L15.4 8" stroke="#0f2e1e" stroke-width="1.12"/></g></svg>
<svg class="a" style="left:575px;top:357px" width="16" height="16" viewBox="0 0 16 16" fill="none" stroke="#1b6040" stroke-width="1.6" stroke-linejoin="round" stroke-linecap="round"><g stroke="#6ad6a2" stroke-width="2.28" opacity="0.8"><path d="M1.8 1.2H14.2" stroke-width="2.36" stroke-linecap="butt"/><path d="M8 2.4V15.2" stroke-width="2.44" stroke-linecap="butt"/><path d="M3.2 7.4L8 2.6L12.8 7.4" stroke-width="2.28"/></g><g stroke-width="1.28"><path d="M1.8 1.2H14.2" stroke-width="1.36" stroke-linecap="butt"/><path d="M8 2.4V15.2" stroke-width="1.44" stroke-linecap="butt"/><path d="M3.2 7.4L8 2.6L12.8 7.4" stroke-width="1.28"/></g></svg>
<svg class="a" style="left:551px;top:381px" width="16" height="16" viewBox="0 0 16 16" fill="none" stroke="#1b6040" stroke-width="1.6" stroke-linejoin="round" stroke-linecap="round"><g stroke="#6ad6a2" stroke-width="2.28" opacity="0.8"><path d="M1.2 1.8V14.2" stroke-width="2.36" stroke-linecap="butt"/><path d="M2.4 8H15.2" stroke-width="2.44" stroke-linecap="butt"/><path d="M7.4 3.2L2.6 8L7.4 12.8" stroke-width="2.28"/></g><g stroke-width="1.28"><path d="M1.2 1.8V14.2" stroke-width="1.36" stroke-linecap="butt"/><path d="M2.4 8H15.2" stroke-width="1.44" stroke-linecap="butt"/><path d="M7.4 3.2L2.6 8L7.4 12.8" stroke-width="1.28"/></g></svg>
<svg class="a" style="left:599px;top:381px" width="16" height="16" viewBox="0 0 16 16" fill="none" stroke="#1b6040" stroke-width="1.6" stroke-linejoin="round" stroke-linecap="round"><g stroke="#6ad6a2" stroke-width="2.28" opacity="0.8"><path d="M14.8 1.8V14.2" stroke-width="2.36" stroke-linecap="butt"/><path d="M13.6 8H0.8" stroke-width="2.44" stroke-linecap="butt"/><path d="M8.6 3.2L13.4 8L8.6 12.8" stroke-width="2.28"/></g><g stroke-width="1.28"><path d="M14.8 1.8V14.2" stroke-width="1.36" stroke-linecap="butt"/><path d="M13.6 8H0.8" stroke-width="1.44" stroke-linecap="butt"/><path d="M8.6 3.2L13.4 8L8.6 12.8" stroke-width="1.28"/></g></svg>
<svg class="a" style="left:575px;top:405px" width="16" height="16" viewBox="0 0 16 16" fill="none" stroke="#1b6040" stroke-width="1.6" stroke-linejoin="round" stroke-linecap="round"><g stroke="#6ad6a2" stroke-width="2.28" opacity="0.8"><path d="M1.8 14.8H14.2" stroke-width="2.36" stroke-linecap="butt"/><path d="M8 13.6V0.8" stroke-width="2.44" stroke-linecap="butt"/><path d="M3.2 8.6L8 13.4L12.8 8.6" stroke-width="2.28"/></g><g stroke-width="1.28"><path d="M1.8 14.8H14.2" stroke-width="1.36" stroke-linecap="butt"/><path d="M8 13.6V0.8" stroke-width="1.44" stroke-linecap="butt"/><path d="M3.2 8.6L8 13.4L12.8 8.6" stroke-width="1.28"/></g></svg>
<svg class="a" style="left:563px;top:435px" width="16" height="16" viewBox="0 0 16 16" fill="none" stroke="#1b6040" stroke-width="1.6" stroke-linejoin="round" stroke-linecap="round"><g stroke="#6ad6a2" stroke-width="2.28" opacity="0.8"><path d="M0.6 1.6L3 8L0.6 14.4M15.4 1.6L13 8L15.4 14.4" stroke-width="2.20"/><rect x="5" y="1.6" width="6" height="12.8" stroke="#6ad6a2" stroke-width="2.20"/></g><g stroke-width="1.28"><path d="M0.6 1.6L3 8L0.6 14.4M15.4 1.6L13 8L15.4 14.4" stroke-width="1.20"/><rect x="5" y="1.6" width="6" height="12.8" stroke="#0f2e1e" stroke-width="1.20"/></g></svg>
<svg class="a" style="left:587px;top:435px" width="16" height="16" viewBox="0 0 16 16" fill="none" stroke="#1b6040" stroke-width="1.6" stroke-linejoin="round" stroke-linecap="round"><g stroke="#6ad6a2" stroke-width="2.28" opacity="0.8"><path d="M1.6 0.6L8 3L14.4 0.6M1.6 15.4L8 13L14.4 15.4" stroke-width="2.20"/><rect x="1.6" y="5" width="12.8" height="6" stroke="#6ad6a2" stroke-width="2.20"/></g><g stroke-width="1.28"><path d="M1.6 0.6L8 3L14.4 0.6M1.6 15.4L8 13L14.4 15.4" stroke-width="1.20"/><rect x="1.6" y="5" width="12.8" height="6" stroke="#0f2e1e" stroke-width="1.20"/></g></svg>
<svg class="a" style="left:563px;top:465px" width="16" height="16" viewBox="0 0 16 16" fill="none" stroke="#1b6040" stroke-width="1.6" stroke-linejoin="round" stroke-linecap="round"><g stroke="#6ad6a2" stroke-width="2.28" opacity="0.8"><path d="M8 15.6V1.6" stroke-width="2.60" stroke-linecap="butt"/><path d="M1.2 8.2L8 1.4L14.8 8.2" stroke-width="2.28"/></g><g stroke-width="1.28"><path d="M8 15.6V1.6" stroke-width="1.60" stroke-linecap="butt"/><path d="M1.2 8.2L8 1.4L14.8 8.2" stroke-width="1.28"/></g></svg>
<svg class="a" style="left:587px;top:465px" width="16" height="16" viewBox="0 0 16 16" fill="none" stroke="#1b6040" stroke-width="1.6" stroke-linejoin="round" stroke-linecap="round"><g stroke="#6ad6a2" stroke-width="2.28" opacity="0.8"><path d="M8 0.4V14.4" stroke-width="2.60" stroke-linecap="butt"/><path d="M1.2 7.8L8 14.6L14.8 7.8" stroke-width="2.28"/></g><g stroke-width="1.28"><path d="M8 0.4V14.4" stroke-width="1.60" stroke-linecap="butt"/><path d="M1.2 7.8L8 14.6L14.8 7.8" stroke-width="1.28"/></g></svg>

<div class="a" id="list">
<div class="row" style="top:0px"><span class="ch">&gt;</span><span class="num">62</span><svg class="gl" viewBox="0 0 6 8" preserveAspectRatio="none" fill="#000"><rect x="0" y="0" width="1" height="1"/><rect x="1" y="1" width="1" height="1"/><rect x="2" y="2" width="1" height="1"/><rect x="3" y="3" width="1" height="1"/><rect x="2" y="4" width="1" height="1"/><rect x="1" y="5" width="1" height="1"/><rect x="0" y="6" width="1" height="1"/></svg></div>
<div class="sep" style="top:34px"></div>
<div class="row" style="top:35px"><span class="ch">?</span><span class="num">63</span><svg class="gl" viewBox="0 0 6 8" preserveAspectRatio="none" fill="#000"><rect x="1" y="0" width="3" height="1"/><rect x="0" y="1" width="1" height="1"/><rect x="4" y="1" width="1" height="1"/><rect x="4" y="2" width="1" height="1"/><rect x="3" y="3" width="1" height="1"/><rect x="2" y="4" width="1" height="1"/><rect x="2" y="6" width="1" height="1"/></svg></div>
<div class="sep" style="top:69px"></div>
<div class="row" style="top:70px"><span class="ch" style="transform:translateY(1.5px) scale(0.74,1.1)">@</span><span class="num">64</span><svg class="gl" viewBox="0 0 6 8" preserveAspectRatio="none" fill="#000"><rect x="1" y="0" width="3" height="1"/><rect x="0" y="1" width="1" height="1"/><rect x="4" y="1" width="1" height="1"/><rect x="0" y="2" width="1" height="1"/><rect x="2" y="2" width="3" height="1"/><rect x="0" y="3" width="1" height="1"/><rect x="2" y="3" width="1" height="1"/><rect x="4" y="3" width="1" height="1"/><rect x="0" y="4" width="1" height="1"/><rect x="2" y="4" width="2" height="1"/><rect x="0" y="5" width="1" height="1"/><rect x="1" y="6" width="3" height="1"/></svg></div>
<div class="sep" style="top:104px"></div>
<div class="row" style="top:105px"><span class="ch">A</span><span class="num">65</span><svg class="gl" viewBox="0 0 6 8" preserveAspectRatio="none" fill="#000"><rect x="1" y="0" width="3" height="1"/><rect x="0" y="1" width="1" height="1"/><rect x="4" y="1" width="1" height="1"/><rect x="0" y="2" width="1" height="1"/><rect x="4" y="2" width="1" height="1"/><rect x="0" y="3" width="5" height="1"/><rect x="0" y="4" width="1" height="1"/><rect x="4" y="4" width="1" height="1"/><rect x="0" y="5" width="1" height="1"/><rect x="4" y="5" width="1" height="1"/><rect x="0" y="6" width="1" height="1"/><rect x="4" y="6" width="1" height="1"/></svg></div>
<div class="row sel" style="top:140px"><span class="ch">B</span><span class="num">66</span><svg class="gl" viewBox="0 0 6 8" preserveAspectRatio="none" fill="#fff"><rect x="0" y="0" width="4" height="1"/><rect x="0" y="1" width="1" height="1"/><rect x="4" y="1" width="1" height="1"/><rect x="0" y="2" width="1" height="1"/><rect x="4" y="2" width="1" height="1"/><rect x="0" y="3" width="4" height="1"/><rect x="0" y="4" width="1" height="1"/><rect x="4" y="4" width="1" height="1"/><rect x="0" y="5" width="1" height="1"/><rect x="4" y="5" width="1" height="1"/><rect x="0" y="6" width="4" height="1"/></svg></div>
<div class="row" style="top:175px"><span class="ch">C</span><span class="num">67</span><svg class="gl" viewBox="0 0 6 8" preserveAspectRatio="none" fill="#000"><rect x="1" y="0" width="3" height="1"/><rect x="0" y="1" width="1" height="1"/><rect x="4" y="1" width="1" height="1"/><rect x="0" y="2" width="1" height="1"/><rect x="0" y="3" width="1" height="1"/><rect x="0" y="4" width="1" height="1"/><rect x="0" y="5" width="1" height="1"/><rect x="4" y="5" width="1" height="1"/><rect x="1" y="6" width="3" height="1"/></svg></div>
<div class="sep" style="top:209px"></div>
<div class="row" style="top:210px"><span class="ch">D</span><span class="num">68</span><svg class="gl" viewBox="0 0 6 8" preserveAspectRatio="none" fill="#000"><rect x="0" y="0" width="4" height="1"/><rect x="0" y="1" width="1" height="1"/><rect x="4" y="1" width="1" height="1"/><rect x="0" y="2" width="1" height="1"/><rect x="4" y="2" width="1" height="1"/><rect x="0" y="3" width="1" height="1"/><rect x="4" y="3" width="1" height="1"/><rect x="0" y="4" width="1" height="1"/><rect x="4" y="4" width="1" height="1"/><rect x="0" y="5" width="1" height="1"/><rect x="4" y="5" width="1" height="1"/><rect x="0" y="6" width="4" height="1"/></svg></div>
<div class="sep" style="top:244px"></div>
<div class="row" style="top:245px"><span class="ch">E</span><span class="num">69</span><svg class="gl" viewBox="0 0 6 8" preserveAspectRatio="none" fill="#000"><rect x="0" y="0" width="5" height="1"/><rect x="0" y="1" width="1" height="1"/><rect x="0" y="2" width="1" height="1"/><rect x="0" y="3" width="4" height="1"/><rect x="0" y="4" width="1" height="1"/><rect x="0" y="5" width="1" height="1"/><rect x="0" y="6" width="5" height="1"/></svg></div>
<div class="sep" style="top:279px"></div>
<div class="row" style="top:280px"><span class="ch">F</span><span class="num">70</span><svg class="gl" viewBox="0 0 6 8" preserveAspectRatio="none" fill="#000"><rect x="0" y="0" width="5" height="1"/><rect x="0" y="1" width="1" height="1"/><rect x="0" y="2" width="1" height="1"/><rect x="0" y="3" width="4" height="1"/><rect x="0" y="4" width="1" height="1"/><rect x="0" y="5" width="1" height="1"/><rect x="0" y="6" width="1" height="1"/></svg></div>
<div class="sep" style="top:314px"></div>
<div class="row" style="top:315px"><span class="ch">G</span><span class="num">71</span><svg class="gl" viewBox="0 0 6 8" preserveAspectRatio="none" fill="#000"><rect x="1" y="0" width="3" height="1"/><rect x="0" y="1" width="1" height="1"/><rect x="4" y="1" width="1" height="1"/><rect x="0" y="2" width="1" height="1"/><rect x="0" y="3" width="1" height="1"/><rect x="3" y="3" width="2" height="1"/><rect x="0" y="4" width="1" height="1"/><rect x="4" y="4" width="1" height="1"/><rect x="0" y="5" width="1" height="1"/><rect x="4" y="5" width="1" height="1"/><rect x="1" y="6" width="3" height="1"/></svg></div>
<div class="sep" style="top:349px"></div>
<div class="row" style="top:350px"><span class="ch">H</span><span class="num">72</span><svg class="gl" viewBox="0 0 6 8" preserveAspectRatio="none" fill="#000"><rect x="0" y="0" width="1" height="1"/><rect x="4" y="0" width="1" height="1"/><rect x="0" y="1" width="1" height="1"/><rect x="4" y="1" width="1" height="1"/><rect x="0" y="2" width="1" height="1"/><rect x="4" y="2" width="1" height="1"/><rect x="0" y="3" width="5" height="1"/><rect x="0" y="4" width="1" height="1"/><rect x="4" y="4" width="1" height="1"/><rect x="0" y="5" width="1" height="1"/><rect x="4" y="5" width="1" height="1"/><rect x="0" y="6" width="1" height="1"/><rect x="4" y="6" width="1" height="1"/></svg></div>
<div class="sep" style="top:384px"></div>
<div class="row" style="top:385px"><div style="position:absolute;left:25.5px;top:8px;width:12px;height:2px;background:#454545"></div><div style="position:absolute;left:30.5px;top:10px;width:2px;height:4px;background:#454545"></div><span class="num">73</span><svg class="gl" viewBox="0 0 6 8" preserveAspectRatio="none" fill="#000"><rect x="0" y="0" width="3" height="1"/><rect x="1" y="1" width="1" height="1"/><rect x="1" y="2" width="1" height="1"/><rect x="1" y="3" width="1" height="1"/><rect x="1" y="4" width="1" height="1"/><rect x="1" y="5" width="1" height="1"/><rect x="0" y="6" width="3" height="1"/></svg></div>
<div class="sep" style="top:419px"></div>
</div>
<svg class="a" style="left:244px;top:107px" width="17" height="396">
<path d="M4.6 11.6L7.5 7.6L10.4 11.6" fill="none" stroke="#606060" stroke-width="2" stroke-linecap="square"/>
<rect x="1" y="66" width="14" height="18" fill="#cdcdcd"/>
<path d="M4.6 385.6L7.5 389.6L10.4 385.6" fill="none" stroke="#606060" stroke-width="2" stroke-linecap="square"/>
</svg>
<svg class="a" style="left:261px;top:280px" width="4" height="34"><rect x="0.5" y="0.5" width="1.5" height="1.5" fill="#fff"/><rect x="1.5" y="1" width="1.5" height="1.5" fill="#a0a0a0"/><rect x="0.5" y="4.5" width="1.5" height="1.5" fill="#fff"/><rect x="1.5" y="5" width="1.5" height="1.5" fill="#a0a0a0"/><rect x="0.5" y="8.5" width="1.5" height="1.5" fill="#fff"/><rect x="1.5" y="9" width="1.5" height="1.5" fill="#a0a0a0"/><rect x="0.5" y="12.5" width="1.5" height="1.5" fill="#fff"/><rect x="1.5" y="13" width="1.5" height="1.5" fill="#a0a0a0"/><rect x="0.5" y="16.5" width="1.5" height="1.5" fill="#fff"/><rect x="1.5" y="17" width="1.5" height="1.5" fill="#a0a0a0"/><rect x="0.5" y="20.5" width="1.5" height="1.5" fill="#fff"/><rect x="1.5" y="21" width="1.5" height="1.5" fill="#a0a0a0"/><rect x="0.5" y="24.5" width="1.5" height="1.5" fill="#fff"/><rect x="1.5" y="25" width="1.5" height="1.5" fill="#a0a0a0"/><rect x="0.5" y="28.5" width="1.5" height="1.5" fill="#fff"/><rect x="1.5" y="29" width="1.5" height="1.5" fill="#a0a0a0"/></svg>


<svg width="272" height="362" style="position:absolute;left:266px;top:124px" shape-rendering="crispEdges"><rect x="1" y="1" width="45" height="45" fill="#ebebeb"/><rect x="46" y="1" width="45" height="45" fill="#fff"/><rect x="91" y="1" width="45" height="45" fill="#ebebeb"/><rect x="136" y="1" width="45" height="45" fill="#fff"/><rect x="181" y="1" width="45" height="45" fill="#ebebeb"/><rect x="226" y="1" width="45" height="45" fill="#fff"/><rect x="1" y="46" width="45" height="45" fill="#fff"/><rect x="46" y="46" width="45" height="45" fill="#ebebeb"/><rect x="91" y="46" width="45" height="45" fill="#fff"/><rect x="136" y="46" width="45" height="45" fill="#ebebeb"/><rect x="181" y="46" width="45" height="45" fill="#fff"/><rect x="226" y="46" width="45" height="45" fill="#ebebeb"/><rect x="1" y="91" width="45" height="45" fill="#ebebeb"/><rect x="46" y="91" width="45" height="45" fill="#fff"/><rect x="91" y="91" width="45" height="45" fill="#ebebeb"/><rect x="136" y="91" width="45" height="45" fill="#fff"/><rect x="181" y="91" width="45" height="45" fill="#ebebeb"/><rect x="226" y="91" width="45" height="45" fill="#fff"/><rect x="1" y="136" width="45" height="45" fill="#fff"/><rect x="46" y="136" width="45" height="45" fill="#ebebeb"/><rect x="91" y="136" width="45" height="45" fill="#fff"/><rect x="136" y="136" width="45" height="45" fill="#ebebeb"/><rect x="181" y="136" width="45" height="45" fill="#fff"/><rect x="226" y="136" width="45" height="45" fill="#ebebeb"/><rect x="1" y="181" width="45" height="45" fill="#ebebeb"/><rect x="46" y="181" width="45" height="45" fill="#fff"/><rect x="91" y="181" width="45" height="45" fill="#ebebeb"/><rect x="136" y="181" width="45" height="45" fill="#fff"/><rect x="181" y="181" width="45" height="45" fill="#ebebeb"/><rect x="226" y="181" width="45" height="45" fill="#fff"/><rect x="1" y="226" width="45" height="45" fill="#fff"/><rect x="46" y="226" width="45" height="45" fill="#ebebeb"/><rect x="91" y="226" width="45" height="45" fill="#fff"/><rect x="136" y="226" width="45" height="45" fill="#ebebeb"/><rect x="181" y="226" width="45" height="45" fill="#fff"/><rect x="226" y="226" width="45" height="45" fill="#ebebeb"/><rect x="1" y="271" width="45" height="45" fill="#ebebeb"/><rect x="46" y="271" width="45" height="45" fill="#fff"/><rect x="91" y="271" width="45" height="45" fill="#ebebeb"/><rect x="136" y="271" width="45" height="45" fill="#fff"/><rect x="181" y="271" width="45" height="45" fill="#ebebeb"/><rect x="226" y="271" width="45" height="45" fill="#fff"/><rect x="1" y="316" width="45" height="45" fill="#fff"/><rect x="46" y="316" width="45" height="45" fill="#ebebeb"/><rect x="91" y="316" width="45" height="45" fill="#fff"/><rect x="136" y="316" width="45" height="45" fill="#ebebeb"/><rect x="181" y="316" width="45" height="45" fill="#fff"/><rect x="226" y="316" width="45" height="45" fill="#ebebeb"/><rect x="0" y="0" width="47" height="47" fill="#fff"/><rect x="45" y="0" width="47" height="47" fill="#fff"/><rect x="90" y="0" width="47" height="47" fill="#fff"/><rect x="135" y="0" width="47" height="47" fill="#fff"/><rect x="0" y="45" width="47" height="47" fill="#fff"/><rect x="180" y="45" width="47" height="47" fill="#fff"/><rect x="0" y="90" width="47" height="47" fill="#fff"/><rect x="180" y="90" width="47" height="47" fill="#fff"/><rect x="0" y="135" width="47" height="47" fill="#fff"/><rect x="45" y="135" width="47" height="47" fill="#fff"/><rect x="90" y="135" width="47" height="47" fill="#fff"/><rect x="135" y="135" width="47" height="47" fill="#fff"/><rect x="0" y="180" width="47" height="47" fill="#fff"/><rect x="180" y="180" width="47" height="47" fill="#fff"/><rect x="0" y="225" width="47" height="47" fill="#fff"/><rect x="180" y="225" width="47" height="47" fill="#fff"/><rect x="0" y="270" width="47" height="47" fill="#fff"/><rect x="45" y="270" width="47" height="47" fill="#fff"/><rect x="90" y="270" width="47" height="47" fill="#fff"/><rect x="135" y="270" width="47" height="47" fill="#fff"/><rect x="1" y="1" width="45" height="45" fill="#000"/><rect x="46" y="1" width="45" height="45" fill="#000"/><rect x="91" y="1" width="45" height="45" fill="#000"/><rect x="136" y="1" width="45" height="45" fill="#000"/><rect x="1" y="46" width="45" height="45" fill="#000"/><rect x="181" y="46" width="45" height="45" fill="#000"/><rect x="1" y="91" width="45" height="45" fill="#000"/><rect x="181" y="91" width="45" height="45" fill="#000"/><rect x="1" y="136" width="45" height="45" fill="#000"/><rect x="46" y="136" width="45" height="45" fill="#000"/><rect x="91" y="136" width="45" height="45" fill="#000"/><rect x="136" y="136" width="45" height="45" fill="#000"/><rect x="1" y="181" width="45" height="45" fill="#000"/><rect x="181" y="181" width="45" height="45" fill="#000"/><rect x="1" y="226" width="45" height="45" fill="#000"/><rect x="181" y="226" width="45" height="45" fill="#000"/><rect x="1" y="271" width="45" height="45" fill="#000"/><rect x="46" y="271" width="45" height="45" fill="#000"/><rect x="91" y="271" width="45" height="45" fill="#000"/><rect x="136" y="271" width="45" height="45" fill="#000"/></svg>

<div class="a" id="status"></div>
<div class="a" style="left:405px;top:505px;width:1px;height:25px;background:#d7d7d7"></div>
<div class="a" style="left:455px;top:505px;width:1px;height:25px;background:#d7d7d7"></div>
<div class="a" style="left:535px;top:505px;width:1px;height:25px;background:#d7d7d7"></div>
<div class="a" style="left:414px;top:511px;line-height:14px">NORM</div>
<div class="a" style="left:460px;top:511px;line-height:14px;letter-spacing:-0.45px">X,Y: 1, 1</div>
<div class="a" style="left:540px;top:511px;line-height:14px;letter-spacing:-0.4px">1.6.10.78</div>

<div class="a" style="left:0;top:31px;width:1px;height:501px;background:#d6d6d6"></div>
<div class="a" style="left:621px;top:31px;width:1px;height:501px;background:#d6d6d6"></div>
<div class="a" style="left:0;top:531px;width:622px;height:1px;background:#d6d6d6"></div>
<svg class="a" style="left:611px;top:521px" width="8" height="8"><rect x="6" y="0" width="2" height="2" fill="#a6a6a6"/><rect x="3" y="3" width="2" height="2" fill="#a6a6a6"/><rect x="6" y="3" width="2" height="2" fill="#a6a6a6"/><rect x="0" y="6" width="2" height="2" fill="#a6a6a6"/><rect x="3" y="6" width="2" height="2" fill="#a6a6a6"/><rect x="6" y="6" width="2" height="2" fill="#a6a6a6"/></svg>
</body></html>
